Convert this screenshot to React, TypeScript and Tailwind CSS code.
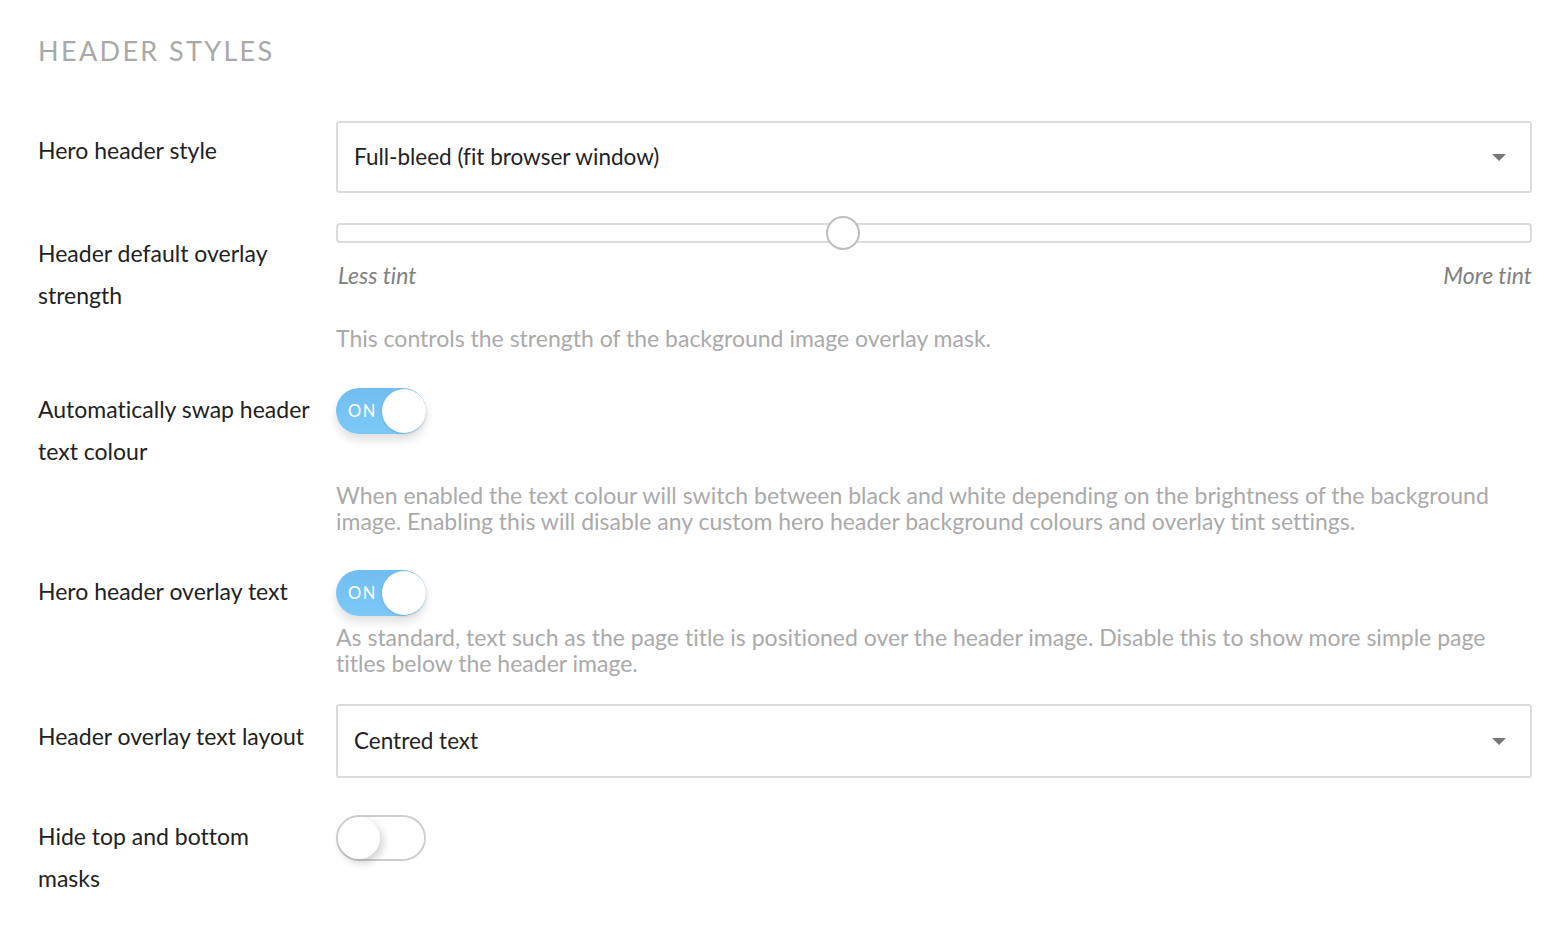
import React from "react";

const lato = { fontFamily: "Lato, 'Noto Sans', sans-serif" };

function Label({ children, pt }: { children: React.ReactNode; pt: string }) {
  return (
    <div className={`w-[298px] shrink-0 text-[23px] leading-[42px] text-[#222] ${pt}`}>{children}</div>
  );
}

function Select({ value, h }: { value: string; h: string }) {
  return (
    <div className={`flex-1 ${h} flex items-center justify-between border-2 border-[#dcdcdc] rounded-[3px] pl-[16px] pr-[24px]`}>
      <span className="text-[22.5px] text-[#222] [font-variant-ligatures:none]">{value}</span>
      <svg width="14" height="7" viewBox="0 0 14 7">
        <path d="M0 0 L14 0 L7 7 Z" fill="#777" />
      </svg>
    </div>
  );
}

function Toggle({ on }: { on: boolean }) {
  if (on) {
    return (
      <div className="relative w-[90px] h-[46px] rounded-full bg-gradient-to-b from-[#72bdf0] to-[#7cc9f8] shadow-[0_6px_10px_rgba(0,0,0,0.12)]">
        <span className="absolute left-[12px] top-0 leading-[46px] text-[16.5px] tracking-[1.5px] text-white">ON</span>
        <div className="absolute right-0 top-[1px] w-[44px] h-[44px] rounded-full bg-white shadow-[0_1px_3px_rgba(0,0,0,0.15)]" />
      </div>
    );
  }
  return (
    <div className="relative w-[90px] h-[46px] rounded-full border-2 border-[#cfcfcf] bg-white">
      <div className="absolute left-[0px] top-[0px] w-[42px] h-[42px] rounded-full bg-white shadow-[3px_4px_8px_rgba(0,0,0,0.18)]" />
    </div>
  );
}

function Desc({ children, mt }: { children: React.ReactNode; mt: string }) {
  return (
    <div className={`ml-[298px] ${mt} text-[23px] leading-[26px] text-[#aaaaaa] whitespace-nowrap`}>{children}</div>
  );
}

export default function App() {
  return (
    <div className="w-[1568px] h-[942px] bg-white pl-[38px] pr-[36px] pt-[35px] [font-variant-ligatures:none]" style={lato}>
      <h1 className="text-[27px] leading-[32px] tracking-[2.35px] text-[#a9a9a9]">HEADER STYLES</h1>

      {/* Row 1 */}
      <div className="flex mt-[54px]">
        <Label pt="pt-[8px]">Hero header style</Label>
        <Select value="Full-bleed (fit browser window)" h="h-[72px]" />
      </div>

      {/* Row 2 */}
      <div className="flex mt-[30px]">
        <Label pt="pt-[9px]">
          Header default overlay
          <br />
          strength
        </Label>
        <div className="flex-1">
          <div className="relative h-[20px] border-2 border-[#dcdcdc] rounded-[4px]">
            <div className="absolute left-[488px] top-[-9px] w-[34px] h-[34px] rounded-full bg-white border-2 border-[#bdbdbd]" />
          </div>
          <div className="flex justify-between mt-[19px] pl-[2px] text-[23px] leading-[26px] italic text-[#808080]">
            <span>Less tint</span>
            <span>More tint</span>
          </div>
        </div>
      </div>
      <Desc mt="mt-[9px]">This controls the strength of the background image overlay mask.</Desc>

      {/* Row 3 */}
      <div className="flex mt-[37px]">
        <Label pt="pt-0">
          Automatically swap header
          <br />
          text colour
        </Label>
        <Toggle on />
      </div>
      <Desc mt="mt-[10px]">
        When enabled the text colour will switch between black and white depending on the brightness of the background
        <br />
        image. Enabling this will disable any custom hero header background colours and overlay tint settings.
      </Desc>

      {/* Row 4 */}
      <div className="flex mt-[36px]">
        <Label pt="pt-0">Hero header overlay text</Label>
        <Toggle on />
      </div>
      <Desc mt="mt-[8px]">
        As standard, text such as the page title is positioned over the header image. Disable this to show more simple page
        <br />
        titles below the header image.
      </Desc>

      {/* Row 5 */}
      <div className="flex mt-[28px]">
        <Label pt="pt-[11px]">Header overlay text layout</Label>
        <Select value="Centred text" h="h-[74px]" />
      </div>

      {/* Row 6 */}
      <div className="flex mt-[37px]">
        <Label pt="pt-0">
          Hide top and bottom
          <br />
          masks
        </Label>
        <Toggle on={false} />
      </div>
    </div>
  );
}
